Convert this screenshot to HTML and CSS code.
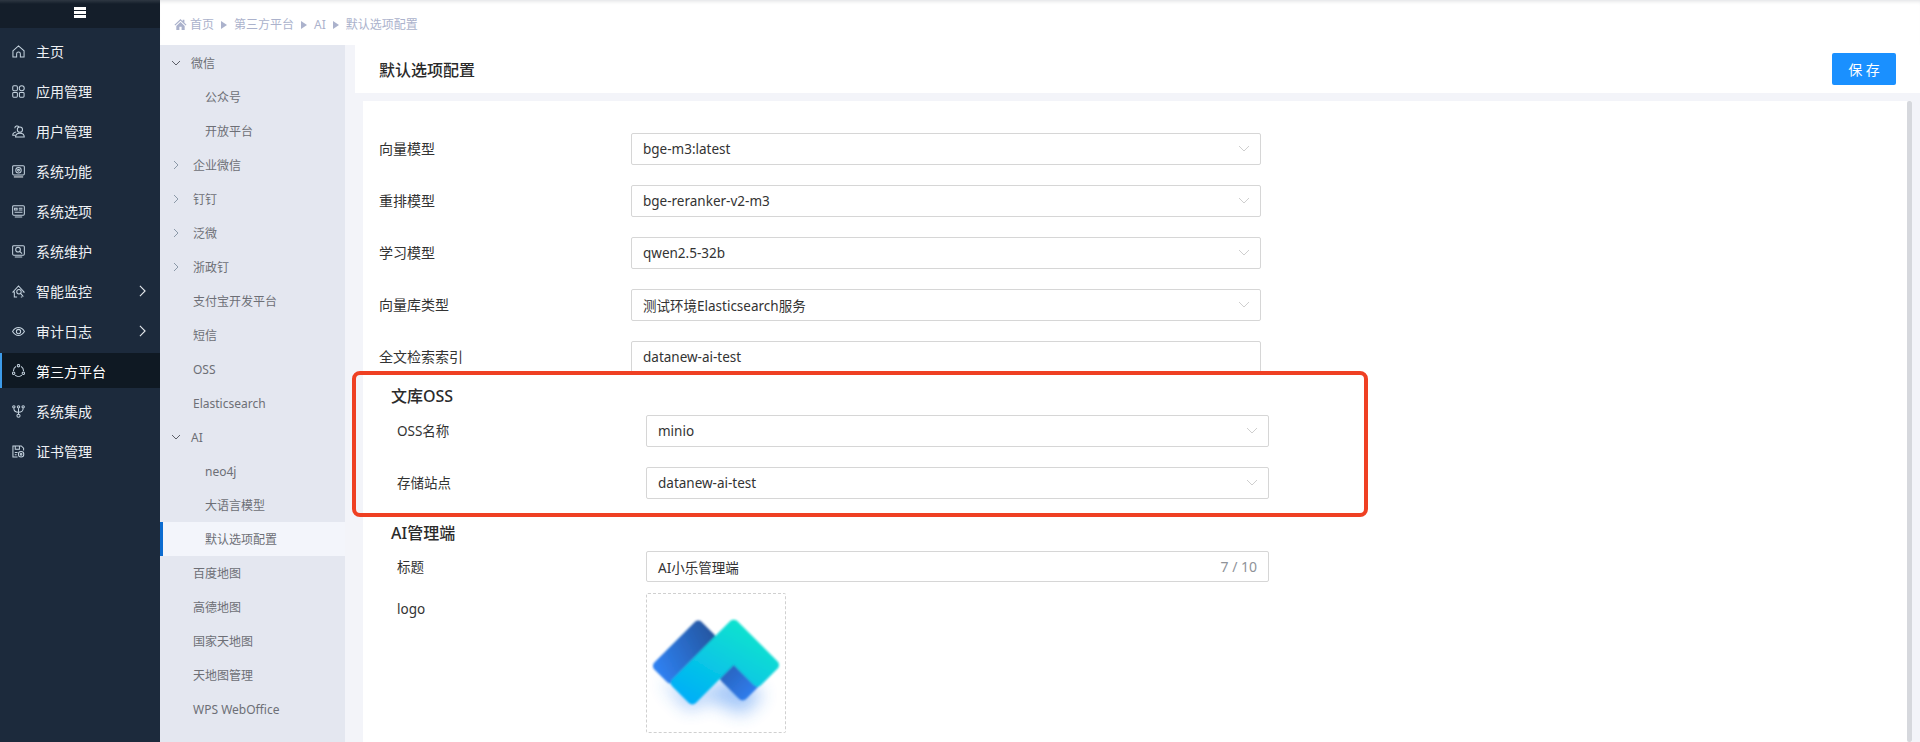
FILE: index.html
```html
<!DOCTYPE html>
<html lang="zh">
<head>
<meta charset="utf-8">
<title>默认选项配置</title>
<link rel="stylesheet" href="styles.css">
</head>
<body>
<div class="app">
  <aside class="side">
    <div class="side-top"><span class="burger"><i></i><i></i><i></i></span></div>
    <nav class="menu">
      <a class="mi"><svg viewBox="0 0 14 14"><path d="M1 6.300 7 1l6 5.300V13H9V9.500a2 2 0 0 0-4 0V13H1z"/></svg>主页</a>
      <a class="mi"><svg viewBox="0 0 14 14"><rect x=".8" y=".8" width="5" height="5.400" rx="1.300"/><circle cx="10.500" cy="3.500" r="2.700"/><rect x=".8" y="8" width="5" height="5.200" rx="1"/><rect x="8" y="8" width="5" height="5.200" rx="1"/></svg>应用管理</a>
      <a class="mi"><svg viewBox="0 0 14 14"><path d="M4.500 7.500C2 7.800.8 9 .8 11h3M3 3.500a2.500 2.500 0 0 1 4.500-1.500"/><circle cx="8.500" cy="5" r="2.800"/><path d="M3.800 13c0-2.700 2-4.200 4.700-4.200s4.700 1.500 4.700 4.200z"/></svg>用户管理</a>
      <a class="mi"><svg viewBox="0 0 14 14"><rect x=".7" y=".7" width="12.600" height="10" rx="1.200"/><circle cx="7" cy="5.700" r="2.900"/><circle cx="7" cy="5.700" r="1"/><path d="M2 12.800h10" class="thick"/></svg>系统功能</a>
      <a class="mi"><svg viewBox="0 0 14 14"><rect x=".7" y=".7" width="12.600" height="10.300" rx="1.200"/><path d="M2.800 3.500h2.700v1.800H2.800zM7.300 3.500h4M7.300 5.500h4M2.800 7.800h8.500M3 13h8"/></svg>系统选项</a>
      <a class="mi"><svg viewBox="0 0 14 14"><rect x=".7" y=".7" width="12.600" height="10.300" rx="1.200"/><circle cx="6.500" cy="5" r="2.500"/><path d="M8.300 6.800 10.800 9.300M3 13h8"/></svg>系统维护</a>
      <a class="mi"><svg viewBox="0 0 14 14"><path d="M5.500 12.800H2.500V7.500H1L7 1l6 6.500h-1.500M11 12.800H9.500"/><circle cx="7.500" cy="7.300" r="2.400"/><path d="M9.200 9l3 3.500"/></svg>智能监控<svg class="arrow" viewBox="0 0 8 14"><path d="M1 1l6 6-6 6"/></svg></a>
      <a class="mi"><svg viewBox="0 0 14 14"><path d="M.6 7C2.400 4 4.500 2.800 7 2.800S11.600 4 13.400 7C11.600 10 9.500 11.200 7 11.200S2.400 10 .6 7z"/><circle cx="7" cy="7" r="2.300"/></svg>审计日志<svg class="arrow" viewBox="0 0 8 14"><path d="M1 1l6 6-6 6"/></svg></a>
      <a class="mi active"><svg viewBox="0 0 14 14"><path d="M4.300 2.500A5.500 5.500 0 0 0 1.600 7.500M9.700 2.500A5.500 5.500 0 0 1 12.400 7.500M3.300 12a5.500 5.500 0 0 0 7.400 0"/><circle cx="7" cy="1.800" r="1.300"/><circle cx="1.800" cy="10" r="1.300"/><circle cx="12.200" cy="10" r="1.300"/></svg>第三方平台</a>
      <a class="mi"><svg viewBox="0 0 14 14"><circle cx="2" cy="2" r="1.300"/><circle cx="7" cy="2" r="1.300"/><circle cx="12" cy="2" r="1.300"/><circle cx="7" cy="11.600" r="1.700"/><path d="M2 3.400C2 7 4 7.700 7 7.700S12 7 12 3.400M7 3.400v6.500"/></svg>系统集成</a>
      <a class="mi"><svg viewBox="0 0 14 14"><path d="M6 13H1V1h9l2.500 2.500V6M3.500 1v3.500h4.500V1M3 8h3M3 10.500h2"/><circle cx="9.800" cy="10" r="2.900"/><circle cx="9.800" cy="10" r=".9"/></svg>证书管理</a>
    </nav>
  </aside>
  <div class="main">
    <header class="crumbs">
      <svg class="home" viewBox="0 0 14 14"><path d="M7 1 .5 7.200l.9.900L7 2.900l5.600 5.200.9-.9-2.300-2.100V2H9.300v1.400zM2.500 8.500V13h3.300V9.500h2.400V13h3.300V8.500L7 4.300z"/></svg>
      <span>首页</span><b class="sep"></b><span>第三方平台</span><b class="sep"></b><span>AI</span><b class="sep"></b><span>默认选项配置</span>
    </header>
    <div class="body">
      <nav class="subnav">
        <a class="si open"><svg class="chev" viewBox="0 0 10 10"><path d="M1 3l4 4 4-4"/></svg>微信</a>
        <a class="si child">公众号</a>
        <a class="si child">开放平台</a>
        <a class="si"><svg class="chev closed" viewBox="0 0 10 10"><path d="M3 1l4 4-4 4"/></svg>企业微信</a>
        <a class="si"><svg class="chev closed" viewBox="0 0 10 10"><path d="M3 1l4 4-4 4"/></svg>钉钉</a>
        <a class="si"><svg class="chev closed" viewBox="0 0 10 10"><path d="M3 1l4 4-4 4"/></svg>泛微</a>
        <a class="si"><svg class="chev closed" viewBox="0 0 10 10"><path d="M3 1l4 4-4 4"/></svg>浙政钉</a>
        <a class="si plain">支付宝开发平台</a>
        <a class="si plain">短信</a>
        <a class="si plain">OSS</a>
        <a class="si plain">Elasticsearch</a>
        <a class="si open"><svg class="chev" viewBox="0 0 10 10"><path d="M1 3l4 4 4-4"/></svg>AI</a>
        <a class="si child">neo4j</a>
        <a class="si child">大语言模型</a>
        <a class="si child current">默认选项配置</a>
        <a class="si plain">百度地图</a>
        <a class="si plain">高德地图</a>
        <a class="si plain">国家天地图</a>
        <a class="si plain">天地图管理</a>
        <a class="si plain">WPS WebOffice</a>
      </nav>
      <section class="content">
        <div class="titlebar">
          <h1>默认选项配置</h1>
          <button class="save">保 存</button>
        </div>
        <div class="panel-wrap">
          <div class="panel">
            <div class="row"><label>向量模型</label><div class="input">bge-m3:latest<svg class="dd" viewBox="0 0 12 8"><path d="M1 1l5 5 5-5"/></svg></div></div>
            <div class="row"><label>重排模型</label><div class="input">bge-reranker-v2-m3<svg class="dd" viewBox="0 0 12 8"><path d="M1 1l5 5 5-5"/></svg></div></div>
            <div class="row"><label>学习模型</label><div class="input">qwen2.5-32b<svg class="dd" viewBox="0 0 12 8"><path d="M1 1l5 5 5-5"/></svg></div></div>
            <div class="row"><label>向量库类型</label><div class="input">测试环境Elasticsearch服务<svg class="dd" viewBox="0 0 12 8"><path d="M1 1l5 5 5-5"/></svg></div></div>
            <div class="row"><label>全文检索索引</label><div class="input">datanew-ai-test</div></div>
            <div class="group oss">
              <h2>文库OSS</h2>
              <div class="row sub"><label>OSS名称</label><div class="input">minio<svg class="dd" viewBox="0 0 12 8"><path d="M1 1l5 5 5-5"/></svg></div></div>
              <div class="row sub"><label>存储站点</label><div class="input">datanew-ai-test<svg class="dd" viewBox="0 0 12 8"><path d="M1 1l5 5 5-5"/></svg></div></div>
            </div>
            <div class="group admin">
              <h2>AI管理端</h2>
              <div class="row sub tight"><label>标题</label><div class="input">AI小乐管理端<span class="count">7 / 10</span></div></div>
              <div class="row sub logo-row"><label>logo</label>
                <div class="upload">
                  <svg viewBox="0 0 140 140" class="logo">
                    <defs>
                      <linearGradient id="lg1" gradientUnits="userSpaceOnUse" x1="8" y1="70" x2="68" y2="40"><stop offset="0" stop-color="#2f80f0"/><stop offset="1" stop-color="#2456a0"/></linearGradient>
                      <linearGradient id="lg2" gradientUnits="userSpaceOnUse" x1="76" y1="72" x2="108" y2="104"><stop offset="0" stop-color="#2a5fb8"/><stop offset="1" stop-color="#2f7ff0"/></linearGradient>
                      <linearGradient id="lg3" gradientUnits="userSpaceOnUse" x1="90" y1="28" x2="42" y2="110"><stop offset="0" stop-color="#0de2cf"/><stop offset="1" stop-color="#02aef8"/></linearGradient>
                      <filter id="soft" x="-10%" y="-10%" width="120%" height="120%"><feGaussianBlur stdDeviation="1.200"/></filter>
                      <filter id="glow" x="-40%" y="-40%" width="180%" height="180%"><feGaussianBlur stdDeviation="9"/></filter>
                    </defs>
                    <path d="M14 88 44 118 60 106 98 122 118 102 90 84 50 100z" fill="#2f80f0" opacity=".45" filter="url(#glow)"/>
                    <g filter="url(#soft)" stroke-linejoin="round" stroke-width="10">
                      <polygon points="11,73 52,32 65,45 24,86" fill="url(#lg1)" stroke="url(#lg1)"/>
                      <polygon points="79,85 97,103 112,88 94,70" fill="url(#lg2)" stroke="url(#lg2)"/>
                      <polygon points="88,31 129,72 112,89 88,65 46,107 29,90" fill="url(#lg3)" stroke="url(#lg3)"/>
                    </g>
                  </svg>
                </div>
              </div>
            </div>
          </div>
          <span class="scroll"></span>
        </div>
      </section>
    </div>
  </div>
  <div class="mark"></div>
</div>
</body>
</html>
```
FILE: styles.css
```css
* { box-sizing: border-box; }
html, body { margin: 0; height: 100%; overflow: hidden; }
body { font-family: "Noto Sans", "Noto Sans CJK SC", sans-serif; font-size: 12px; color: #333; background: #fff; }
a { display: flex; text-decoration: none; }
.app { display: flex; width: 1920px; height: 742px; position: relative; overflow: hidden; }

.side { width: 160px; flex: none; background: #1c2a3c; }
.side-top { height: 28px; background: linear-gradient(#2e3742 0, #141e2a 4px, #141e2a 100%); display: flex; justify-content: center; padding-top: 7px; }
.burger { display: flex; flex-direction: column; gap: 1px; width: 12px; }
.burger i { display: block; height: 3px; background: #fff; }
.menu { padding-top: 3px; }
.mi { height: 40px; align-items: center; padding-left: 12px; color: #eef1f5; font-size: 14px; position: relative; }
.mi svg { width: 13px; height: 13px; margin-right: 11px; fill: none; stroke: #c5d3df; stroke-width: 1.100; flex: none; }
.mi svg.arrow { position: absolute; left: 139px; top: 14px; width: 7px; height: 12px; margin: 0; stroke: #e4e8ec; stroke-width: 1.300; }
.mi svg .thick { stroke-width: 2; stroke: #8f98a3; }
.mi.active { background: #0f1923; color: #fff; box-shadow: inset 2px 0 0 #3d9be9; height: 35px; margin: 2px 0 3px; }

.main { flex: 1; min-width: 0; display: flex; flex-direction: column; }
.crumbs { height: 45px; flex: none; display: flex; align-items: center; padding: 4px 0 0 14px; color: #abb2cc; box-shadow: inset 0 4px 4px -3px #dcdde0; }
.crumbs span { line-height: 14px; }
.home { width: 13px; height: 13px; fill: #abb2cc; margin-right: 3px; }
.sep { width: 0; height: 0; border-left: 6px solid #abb2cc; border-top: 4px solid transparent; border-bottom: 4px solid transparent; margin: 0 7px; }

.body { flex: 1; display: flex; min-height: 0; }
.subnav { width: 185px; flex: none; background: #e4e7f0; padding-top: 1px; }
.si { height: 34px; align-items: center; padding-left: 33px; color: #6d6f76; font-size: 12px; position: relative; }
.si.open { padding-left: 31px; }
.si .chev { position: absolute; left: 11px; top: 12px; width: 10px; height: 10px; fill: none; stroke: #5c5f68; stroke-width: 1; }
.si .chev.closed { stroke: #8b99a8; }
.si.child { padding-left: 45px; }
.si.current { background: #f3f5fb; box-shadow: inset 3px 0 0 #0c6cd0; }

.content { flex: 1; min-width: 0; background: #f3f4f9; padding-left: 10px; display: flex; flex-direction: column; }
.titlebar { height: 48px; flex: none; background: #fff; display: flex; align-items: center; justify-content: space-between; padding: 0 24px; }
h1 { margin: 0; font-size: 16px; font-weight: 500; color: #2a2a2a; }
.save { width: 64px; height: 32px; border: 0; border-radius: 2px; background: #1a90ff; color: #fff; font: inherit; font-size: 14px; padding: 0; }
.panel-wrap { flex: 1; display: flex; padding: 8px 8px 0; min-height: 0; }
.panel { flex: 1; background: #fff; padding: 32px 0 0 16px; overflow: hidden; }
.scroll { width: 5px; flex: none; background: #d6d8dd; border-radius: 2px; margin-left: -5px; }

.row { display: flex; align-items: center; height: 32px; margin-bottom: 20px; width: 882px; }
.row label { width: 252px; flex: none; color: #333; font-size: 14px; padding-bottom: 2px; }
.input { flex: 1; height: 32px; border: 1px solid #d6d6d6; border-radius: 2px; display: flex; align-items: center; padding-left: 11px; font-size: 13.500px; color: #333; position: relative; }
.dd { position: absolute; right: 10px; top: 11px; width: 12px; height: 8px; fill: none; stroke: #cfcfcf; stroke-width: 1; }
.count { position: absolute; right: 11px; color: #909399; font-size: 14px; }

.group { padding-left: 12px; }
h2 { margin: 0; font-size: 16px; font-weight: 500; color: #2b2b2b; line-height: 22px; }
.oss { margin-top: -8px; }
.oss h2 { margin-bottom: 8px; }
.sub { width: 878px; padding-left: 6px; }
.sub label { width: 249px; font-size: 13.500px; }
.admin { margin-top: 23px; }
.admin h2 { margin-bottom: 7px; }
.tight { height: 31px; margin-bottom: 11px; }
.tight .input { height: 31px; }
.logo-row { align-items: flex-start; height: 140px; margin: 0; }
.logo-row label { line-height: 32px; }
.upload { width: 140px; height: 140px; border: 1px dashed #d0d0d0; border-radius: 2px; flex: none; }
.logo { display: block; width: 138px; height: 138px; }

.mark { position: absolute; left: 352px; top: 371px; width: 1016px; height: 146px; border: 4px solid #ef4023; border-radius: 8px; }
```
